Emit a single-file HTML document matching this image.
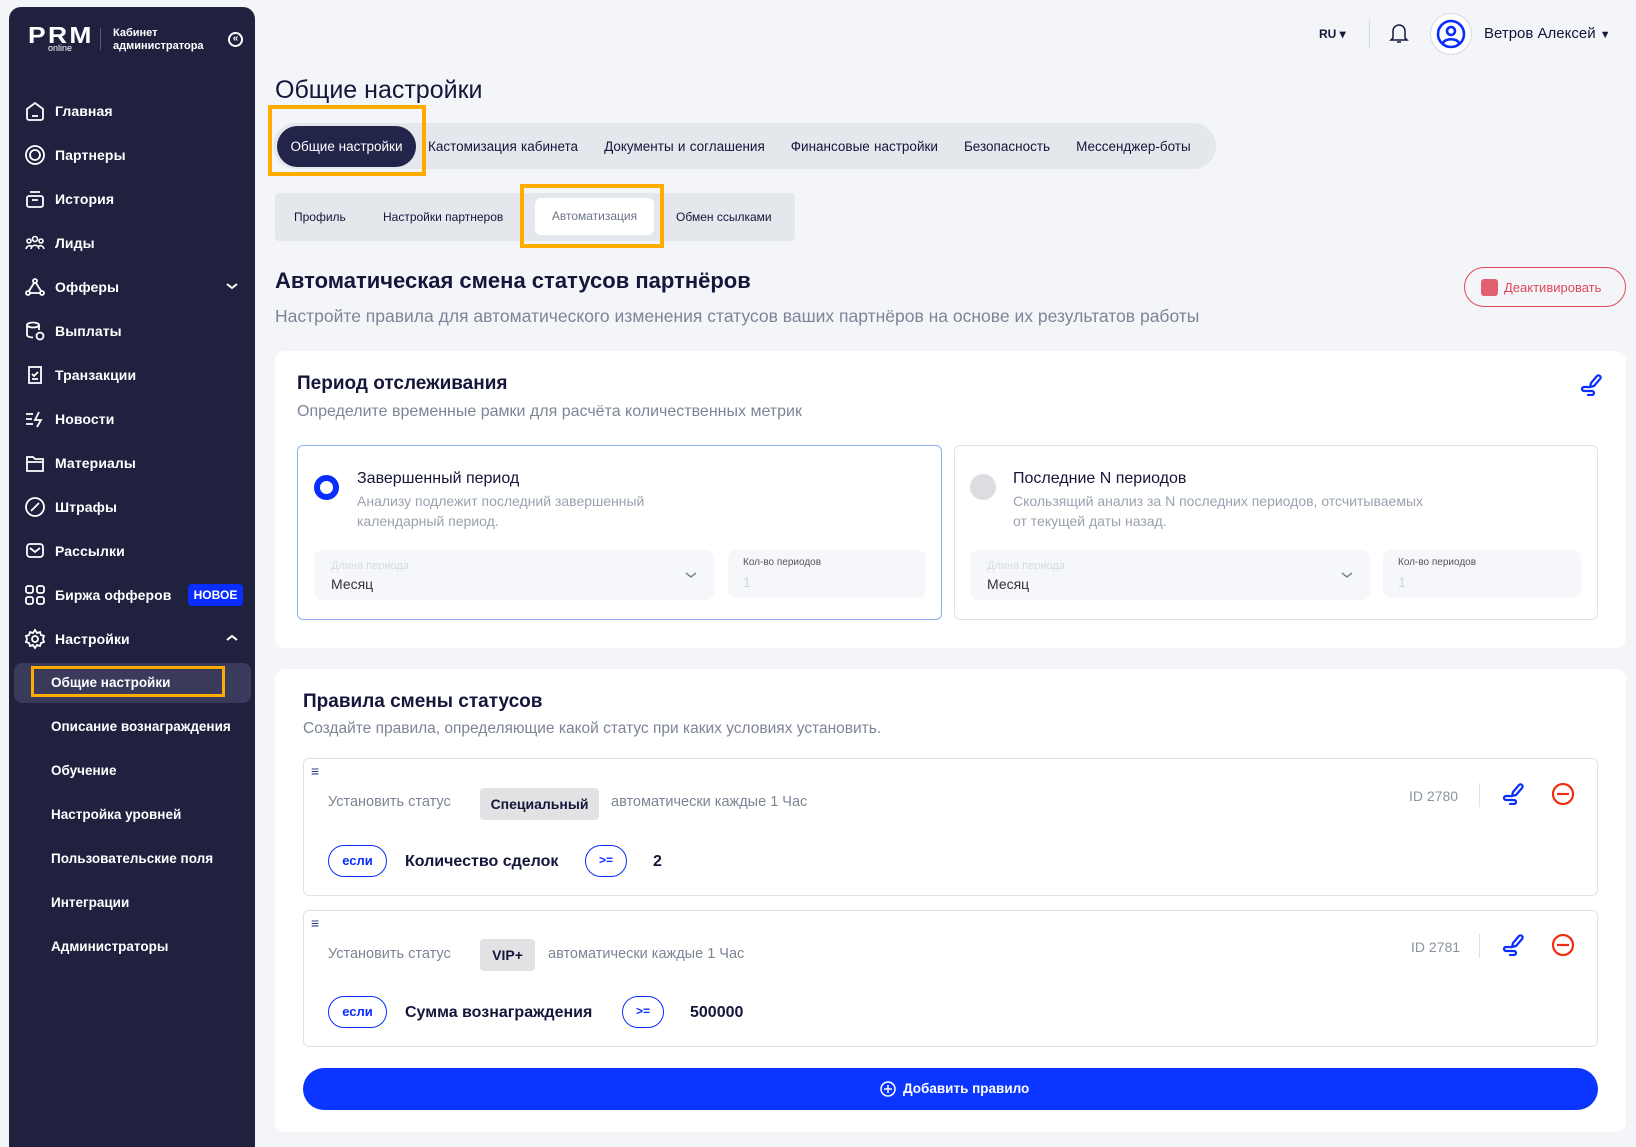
<!DOCTYPE html>
<html><head><meta charset="utf-8"><style>
*{box-sizing:border-box;margin:0;padding:0}
body{width:1636px;height:1143px;overflow:hidden;background:#f3f5f9;font-family:"Liberation Sans",sans-serif;position:relative;color:#14163a}
.a{position:absolute}
.sb{left:9px;top:7px;width:246px;height:1140px;background:#20213f;border-radius:12px 12px 0 0}
.mi{position:absolute;left:55px;color:#fff;font-size:14px;font-weight:bold;letter-spacing:0.1px;line-height:18px}
.ic{position:absolute;left:24px;width:22px;height:22px}
.sub{position:absolute;left:51px;color:#fff;font-size:13.5px;font-weight:bold;line-height:18px}
.card{background:#fff;border-radius:10px}
.gray{color:#7c8596}
.box{border:1px solid #dfe2ea;border-radius:6px;background:#fff}
.fld{background:#f5f7fa;border-radius:8px}
.pill{border:1.5px solid #0a2dff;border-radius:20px;color:#0a2dff;font-size:14px;font-weight:bold;text-align:center}
.tag{background:#e2e2e4;border-radius:4px;font-size:14px;font-weight:bold;display:flex;align-items:center;justify-content:center}
</style></head><body>
<div class="a sb"></div>
<!-- logo -->
<div class="a" style="left:28px;top:24px;color:#fff;font-weight:bold;font-size:23px;letter-spacing:2px;line-height:22px;transform:scaleX(1.15);transform-origin:left">PRM</div>
<div class="a" style="left:48px;top:43px;color:#fff;font-size:9px;line-height:10px">online</div>
<div class="a" style="left:100px;top:28px;width:1px;height:22px;background:#555874"></div>
<div class="a" style="left:113px;top:27px;color:#fff;font-size:11px;line-height:13px;font-weight:bold">Кабинет<br>администратора</div>
<div class="a" style="left:228px;top:32px;width:15px;height:15px;border:2px solid #fff;border-radius:50%;color:#fff;font-size:10px;line-height:10px;text-align:center;font-weight:bold">«</div>

<svg class="ic" style="top:100px" viewBox="0 0 22 22" fill="none" stroke="#fff" stroke-width="1.8"><path d="M3 9l8-6 8 6v9a2 2 0 0 1-2 2H5a2 2 0 0 1-2-2z"/><path d="M8 16h6"/></svg>
<div class="mi" style="top:102px">Главная</div>
<svg class="ic" style="top:144px" viewBox="0 0 22 22" fill="none" stroke="#fff" stroke-width="1.8"><circle cx="11" cy="11" r="9"/><circle cx="11" cy="11" r="5"/></svg>
<div class="mi" style="top:146px">Партнеры</div>
<svg class="ic" style="top:188px" viewBox="0 0 22 22" fill="none" stroke="#fff" stroke-width="1.8"><rect x="3" y="8" width="16" height="11" rx="2"/><path d="M6 4h10M8 12h6"/></svg>
<div class="mi" style="top:190px">История</div>
<svg class="ic" style="top:232px" viewBox="0 0 22 22" fill="none" stroke="#fff" stroke-width="1.6"><circle cx="11" cy="7" r="2.5"/><circle cx="5" cy="9" r="2"/><circle cx="17" cy="9" r="2"/><path d="M2 17c1-4 5-4 6-2M20 17c-1-4-5-4-6-2M7 17c1-5 7-5 8 0"/></svg>
<div class="mi" style="top:234px">Лиды</div>
<svg class="ic" style="top:276px" viewBox="0 0 22 22" fill="none" stroke="#fff" stroke-width="1.8"><circle cx="11" cy="5" r="2"/><circle cx="4" cy="17" r="2"/><circle cx="18" cy="17" r="2"/><path d="M10 7l-5 8M12 7l5 8M6 17h10"/></svg>
<div class="mi" style="top:278px">Офферы</div>
<svg class="a" style="left:225px;top:281px" width="14" height="10" viewBox="0 0 14 10" fill="none" stroke="#fff" stroke-width="2"><path d="M2 3l5 4 5-4"/></svg>
<svg class="ic" style="top:320px" viewBox="0 0 22 22" fill="none" stroke="#fff" stroke-width="1.8"><ellipse cx="9" cy="5" rx="6" ry="2.5"/><path d="M3 5v10c0 1.5 3 2.5 6 2.5M15 5v5"/><circle cx="16" cy="16" r="3.5"/></svg>
<div class="mi" style="top:322px">Выплаты</div>
<svg class="ic" style="top:364px" viewBox="0 0 22 22" fill="none" stroke="#fff" stroke-width="1.8"><rect x="5" y="3" width="12" height="16"/><path d="M8 10l2 2 4-4M8 15h6"/></svg>
<div class="mi" style="top:366px">Транзакции</div>
<svg class="ic" style="top:408px" viewBox="0 0 22 22" fill="none" stroke="#fff" stroke-width="1.8"><path d="M2 6h7M2 11h6M2 16h7M15 4l-4 8h6l-4 7"/></svg>
<div class="mi" style="top:410px">Новости</div>
<svg class="ic" style="top:452px" viewBox="0 0 22 22" fill="none" stroke="#fff" stroke-width="1.8"><path d="M3 5h6l2 2h8v12H3zM3 10h16"/></svg>
<div class="mi" style="top:454px">Материалы</div>
<svg class="ic" style="top:496px" viewBox="0 0 22 22" fill="none" stroke="#fff" stroke-width="1.8"><circle cx="11" cy="11" r="9"/><path d="M7 15l8-8"/></svg>
<div class="mi" style="top:498px">Штрафы</div>
<svg class="ic" style="top:540px" viewBox="0 0 22 22" fill="none" stroke="#fff" stroke-width="1.8"><rect x="3" y="4" width="16" height="13" rx="3"/><path d="M6 8l5 4 5-4"/></svg>
<div class="mi" style="top:542px">Рассылки</div>
<svg class="ic" style="top:584px" viewBox="0 0 22 22" fill="none" stroke="#fff" stroke-width="1.8"><rect x="2" y="2" width="7" height="7" rx="2"/><rect x="13" y="2" width="7" height="7" rx="2"/><rect x="2" y="13" width="7" height="7" rx="2"/><rect x="13" y="13" width="7" height="7" rx="2"/></svg>
<div class="mi" style="top:586px">Биржа офферов</div>
<div class="a" style="left:188px;top:584px;width:55px;height:22px;background:#0a2dff;border-radius:4px;color:#fff;font-size:12px;font-weight:bold;text-align:center;line-height:22px">НОВОЕ</div>
<svg class="ic" style="top:628px" viewBox="0 0 22 22" fill="none" stroke="#fff" stroke-width="1.8"><circle cx="11" cy="11" r="3"/><path d="M11 2l2 3 3-1 1 3 3 1-1 3 1 3-3 1-1 3-3-1-2 3-2-3-3 1-1-3-3-1 1-3-1-3 3-1 1-3 3 1z"/></svg>
<div class="mi" style="top:630px">Настройки</div>
<svg class="a" style="left:225px;top:633px" width="14" height="10" viewBox="0 0 14 10" fill="none" stroke="#fff" stroke-width="2"><path d="M2 7l5-4 5 4"/></svg>
<div class="a" style="left:14px;top:663px;width:237px;height:40px;background:#3a3b5a;border-radius:8px"></div>
<div class="a" style="left:31px;top:666px;width:194px;height:31px;border:3px solid #ffab00"></div>
<div class="sub" style="top:674px">Общие настройки</div>
<div class="sub" style="top:718px">Описание вознаграждения</div>
<div class="sub" style="top:762px">Обучение</div>
<div class="sub" style="top:806px">Настройка уровней</div>
<div class="sub" style="top:850px">Пользовательские поля</div>
<div class="sub" style="top:894px">Интеграции</div>
<div class="sub" style="top:938px">Администраторы</div>

<!-- top bar -->
<div class="a" style="left:1319px;top:26px;font-size:12px;font-weight:bold;line-height:16px">RU ▾</div>
<div class="a" style="left:1369px;top:20px;width:1px;height:28px;background:#d5d8e0"></div>
<svg class="a" style="left:1389px;top:22px" width="20" height="22" viewBox="0 0 20 22" fill="none" stroke="#14163a" stroke-width="1.5"><path d="M4 16V9a6 6 0 0 1 12 0v7l2 2H2zM8 20h4"/></svg>
<div class="a" style="left:1430px;top:13px;width:42px;height:42px;border:1px solid #d8dbe3;border-radius:50%;background:#fff"></div>
<svg class="a" style="left:1436px;top:19px" width="30" height="30" viewBox="0 0 30 30" fill="none" stroke="#0a2dff" stroke-width="2.6"><circle cx="15" cy="15" r="13"/><circle cx="15" cy="12" r="4"/><path d="M7 24c2-5 14-5 16 0"/></svg>
<div class="a" style="left:1484px;top:25px;font-size:15px;line-height:18px">Ветров Алексей <span style="font-size:11px">▼</span></div>

<div class="a" style="left:275px;top:74px;font-size:25px;line-height:32px">Общие настройки</div>
<!-- tabs -->
<div class="a" style="left:273px;top:123px;width:943px;height:46px;background:#e4e7ec;border-radius:23px"></div>
<div class="a" style="left:277px;top:126px;width:139px;height:41px;background:#23244a;border-radius:21px;color:#fff;font-size:13.5px;line-height:41px;text-align:center">Общие настройки</div>
<div class="a" style="left:268px;top:105px;width:158px;height:71px;border:4px solid #ffab00"></div>
<div class="a" style="top:138px;left:428px;font-size:13.5px;line-height:17px;white-space:nowrap;word-spacing:0.5px">Кастомизация кабинета<span style="margin-left:26px">Документы и соглашения</span><span style="margin-left:26px">Финансовые настройки</span><span style="margin-left:26px">Безопасность</span><span style="margin-left:26px">Мессенджер-боты</span></div>
<div class="a" style="left:275px;top:193px;width:520px;height:48px;background:#e4e7ec;border-radius:4px"></div>
<div class="a" style="left:535px;top:198px;width:119px;height:37px;background:#fff;border-radius:6px;color:#6c7486;font-size:12px;line-height:37px;text-align:center">Автоматизация</div>
<div class="a" style="left:520px;top:184px;width:144px;height:64px;border:4px solid #ffab00"></div>
<div class="a" style="left:294px;top:210px;font-size:12px;line-height:15px">Профиль</div>
<div class="a" style="left:383px;top:210px;font-size:12px;line-height:15px">Настройки партнеров</div>
<div class="a" style="left:676px;top:210px;font-size:12px;line-height:15px">Обмен ссылками</div>

<div class="a" style="left:275px;top:267px;font-size:22px;font-weight:bold;line-height:28px">Автоматическая смена статусов партнёров</div>
<div class="a gray" style="left:275px;top:305px;font-size:17.5px;line-height:22px">Настройте правила для автоматического изменения статусов ваших партнёров на основе их результатов работы</div>
<div class="a" style="left:1464px;top:267px;width:162px;height:40px;border:1.5px solid #e0485a;border-radius:20px"></div>
<div class="a" style="left:1481px;top:279px;width:17px;height:17px;background:#e06070;border-radius:3px"></div>
<div class="a" style="left:1504px;top:279px;color:#e0485a;font-size:13px;line-height:17px">Деактивировать</div>

<!-- card 1 -->
<div class="a card" style="left:275px;top:351px;width:1351px;height:297px"></div>
<div class="a" style="left:297px;top:372px;font-size:19px;font-weight:bold;line-height:24px">Период отслеживания</div>
<div class="a gray" style="left:297px;top:402px;font-size:16px;line-height:20px">Определите временные рамки для расчёта количественных метрик</div>
<svg class="a" style="left:1580px;top:374px" width="24" height="22" viewBox="0 0 24 22" fill="none" stroke="#0a2dff" stroke-width="2.2" stroke-linecap="round"><path d="M14 12l6-7a2 2 0 0 0-3-3l-6 7-1 4z"/><path d="M8 13H4a2 2 0 0 0 0 4h8a2 2 0 0 1 0 4H8"/></svg>
<div class="a" style="left:297px;top:445px;width:645px;height:175px;border:1.5px solid #8eaef0;border-radius:6px;background:#fff"></div>
<div class="a" style="left:314px;top:475px;width:25px;height:25px;border-radius:50%;border:6px solid #0a2dff;background:#fff"></div>
<div class="a" style="left:357px;top:469px;font-size:16px;line-height:20px">Завершенный период</div>
<div class="a" style="left:357px;top:491px;font-size:14px;line-height:20px;color:#9aa2b0">Анализу подлежит последний завершенный<br>календарный период.</div>
<div class="a fld" style="left:314px;top:550px;width:400px;height:50px"></div>
<div class="a" style="left:331px;top:560px;font-size:11px;color:#d6dae4">Длина периода</div>
<div class="a" style="left:331px;top:576px;font-size:14px;color:#333">Месяц</div>
<svg class="a" style="left:684px;top:570px" width="14" height="10" viewBox="0 0 14 10" fill="none" stroke="#7c8596" stroke-width="1.5"><path d="M2 3l5 4 5-4"/></svg>
<div class="a fld" style="left:728px;top:550px;width:198px;height:48px"></div>
<div class="a" style="left:743px;top:557px;font-size:10px;color:#555">Кол-во периодов</div>
<div class="a" style="left:743px;top:574px;font-size:14px;color:#cfd4e6">1</div>

<div class="a box" style="left:954px;top:445px;width:644px;height:175px;border-radius:6px"></div>
<div class="a" style="left:970px;top:474px;width:26px;height:26px;border-radius:50%;background:#dcdde2"></div>
<div class="a" style="left:1013px;top:469px;font-size:16px;line-height:20px">Последние N периодов</div>
<div class="a" style="left:1013px;top:491px;font-size:14px;line-height:20px;color:#9aa2b0">Скользящий анализ за N последних периодов, отсчитываемых<br>от текущей даты назад.</div>
<div class="a fld" style="left:970px;top:550px;width:400px;height:50px"></div>
<div class="a" style="left:987px;top:560px;font-size:11px;color:#d6dae4">Длина периода</div>
<div class="a" style="left:987px;top:576px;font-size:14px;color:#333">Месяц</div>
<svg class="a" style="left:1340px;top:570px" width="14" height="10" viewBox="0 0 14 10" fill="none" stroke="#7c8596" stroke-width="1.5"><path d="M2 3l5 4 5-4"/></svg>
<div class="a fld" style="left:1383px;top:550px;width:198px;height:48px"></div>
<div class="a" style="left:1398px;top:557px;font-size:10px;color:#555">Кол-во периодов</div>
<div class="a" style="left:1398px;top:574px;font-size:14px;color:#cfd4e6">1</div>

<!-- card 2 -->
<div class="a card" style="left:275px;top:669px;width:1351px;height:463px"></div>
<div class="a" style="left:303px;top:690px;font-size:19px;font-weight:bold;line-height:24px">Правила смены статусов</div>
<div class="a gray" style="left:303px;top:719px;font-size:15.5px;line-height:20px">Создайте правила, определяющие какой статус при каких условиях установить.</div>

<div class="a box" style="left:303px;top:758px;width:1295px;height:138px"></div>
<div class="a" style="left:311px;top:763px;color:#2b3a8c;font-size:14px">≡</div>
<div class="a gray" style="left:328px;top:793px;font-size:14.5px;line-height:18px">Установить статус</div>
<div class="a tag" style="left:480px;top:788px;width:119px;height:32px">Специальный</div>
<div class="a gray" style="left:611px;top:793px;font-size:14.5px;line-height:18px">автоматически каждые 1 Час</div>
<div class="a pill" style="left:328px;top:845px;width:59px;height:32px;line-height:29px;font-size:13px">если</div>
<div class="a" style="left:405px;top:852px;font-size:16px;font-weight:bold;line-height:20px">Количество сделок</div>
<div class="a pill" style="left:585px;top:845px;width:42px;height:32px;line-height:29px;font-size:12px">&gt;=</div>
<div class="a" style="left:653px;top:852px;font-size:16px;font-weight:bold;line-height:20px">2</div>
<div class="a" style="left:1409px;top:788px;font-size:14px;color:#8a93a3">ID 2780</div>
<div class="a" style="left:1479px;top:783px;width:1px;height:24px;background:#dfe2ea"></div>
<svg class="a" style="left:1502px;top:783px" width="24" height="22" viewBox="0 0 24 22" fill="none" stroke="#0a2dff" stroke-width="2.2" stroke-linecap="round"><path d="M14 12l6-7a2 2 0 0 0-3-3l-6 7-1 4z"/><path d="M8 13H4a2 2 0 0 0 0 4h8a2 2 0 0 1 0 4H8"/></svg>
<svg class="a" style="left:1551px;top:782px" width="24" height="24" viewBox="0 0 24 24" fill="none" stroke="#f02d10" stroke-width="2.2"><circle cx="12" cy="12" r="10"/><path d="M6 12h12"/></svg>

<div class="a box" style="left:303px;top:910px;width:1295px;height:137px"></div>
<div class="a" style="left:311px;top:915px;color:#2b3a8c;font-size:14px">≡</div>
<div class="a gray" style="left:328px;top:945px;font-size:14.5px;line-height:18px">Установить статус</div>
<div class="a tag" style="left:480px;top:939px;width:55px;height:32px">VIP+</div>
<div class="a gray" style="left:548px;top:945px;font-size:14.5px;line-height:18px">автоматически каждые 1 Час</div>
<div class="a pill" style="left:328px;top:996px;width:59px;height:32px;line-height:29px;font-size:13px">если</div>
<div class="a" style="left:405px;top:1003px;font-size:16px;font-weight:bold;line-height:20px">Сумма вознаграждения</div>
<div class="a pill" style="left:622px;top:996px;width:42px;height:32px;line-height:29px;font-size:12px">&gt;=</div>
<div class="a" style="left:690px;top:1003px;font-size:16px;font-weight:bold;line-height:20px">500000</div>
<div class="a" style="left:1411px;top:939px;font-size:14px;color:#8a93a3">ID 2781</div>
<div class="a" style="left:1479px;top:934px;width:1px;height:24px;background:#dfe2ea"></div>
<svg class="a" style="left:1502px;top:934px" width="24" height="22" viewBox="0 0 24 22" fill="none" stroke="#0a2dff" stroke-width="2.2" stroke-linecap="round"><path d="M14 12l6-7a2 2 0 0 0-3-3l-6 7-1 4z"/><path d="M8 13H4a2 2 0 0 0 0 4h8a2 2 0 0 1 0 4H8"/></svg>
<svg class="a" style="left:1551px;top:933px" width="24" height="24" viewBox="0 0 24 24" fill="none" stroke="#f02d10" stroke-width="2.2"><circle cx="12" cy="12" r="10"/><path d="M6 12h12"/></svg>

<div class="a" style="left:303px;top:1068px;width:1295px;height:42px;background:#0a36ff;border-radius:21px"></div>
<svg class="a" style="left:880px;top:1081px" width="16" height="16" viewBox="0 0 16 16" fill="none" stroke="#fff" stroke-width="1.5"><circle cx="8" cy="8" r="7"/><path d="M8 4v8M4 8h8"/></svg>
<div class="a" style="left:903px;top:1081px;color:#fff;font-size:13.5px;font-weight:bold;line-height:16px">Добавить правило</div>
</body></html>
